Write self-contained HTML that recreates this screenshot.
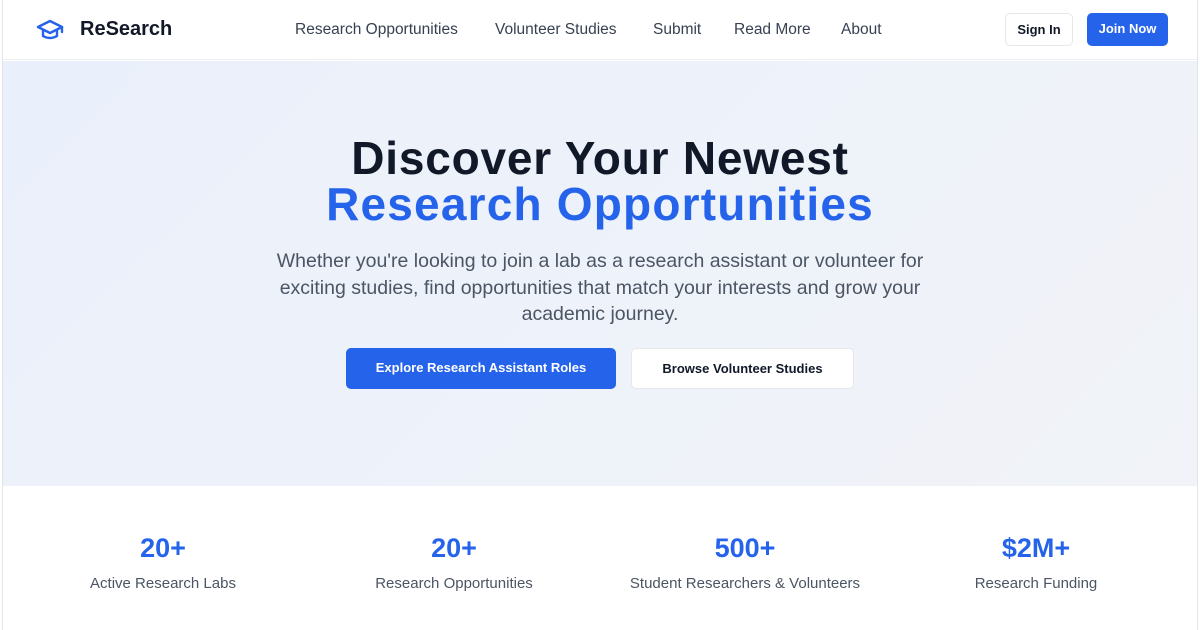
<!DOCTYPE html>
<html><head><meta charset="utf-8"><style>
*{margin:0;padding:0;box-sizing:border-box}
body{width:1200px;height:630px;background:#fff;font-family:"Liberation Sans",Arial,sans-serif;overflow:hidden;position:relative}
.frame{position:absolute;left:2px;top:0;width:1196px;height:630px;border-left:1px solid #e2e4e8;border-right:1px solid #e2e4e8}
header{position:absolute;left:3px;top:0;width:1194px;height:60px;background:#fff;border-bottom:1px solid #eceef2}
.logo{position:absolute;left:33px;top:18px;display:flex;align-items:center}
.logo span{font-weight:bold;font-size:20px;color:#111827;margin-left:16px}
nav{position:absolute;top:21px;left:0;font-size:15.5px;color:#374151}
nav a{position:absolute;white-space:nowrap}
.btn{position:absolute;border-radius:5px;font-size:13px;font-weight:bold;text-align:center}
.hero{position:absolute;left:3px;top:61px;width:1194px;height:425px;background:linear-gradient(135deg,#eaf0fb,#f1f3f8)}
h1{position:absolute;top:135px;left:0;width:1200px;text-align:center;font-size:46px;line-height:46px;font-weight:bold;color:#111827;letter-spacing:0.8px}
h1 .b{color:#2563eb;letter-spacing:1.2px}
p.sub{position:absolute;top:248px;left:255px;width:690px;text-align:center;font-size:19.5px;line-height:26.5px;color:#4b5563}
.stat{position:absolute;top:533px;text-align:center;width:300px}
.stat b{display:block;font-size:27px;color:#2563eb;height:42px}
.stat span{font-size:15px;color:#4b5563}
</style></head><body>
<div class="frame"></div>
<header>
<div class="logo"><svg width="28" height="22" viewBox="0 0 28 22" fill="none" stroke="#2563eb" stroke-width="2.4" stroke-linejoin="round" stroke-linecap="round"><path d="M2 8 L14 2 L26 8 L14 14 Z"/><path d="M7 11 V17 Q14 21 21 17 V11"/><path d="M26 8 V13"/></svg><span>ReSearch</span></div>
<nav><a style="left:292px">Research Opportunities</a><a style="left:492px">Volunteer Studies</a><a style="left:650px">Submit</a><a style="left:731px">Read More</a><a style="left:838px">About</a></nav>
<div class="btn" style="left:1002px;top:13px;width:68px;height:33px;line-height:31px;border:1px solid #e5e7eb;color:#111827">Sign In</div>
<div class="btn" style="left:1084px;top:13px;width:81px;height:33px;line-height:31px;background:#2563eb;color:#fff">Join Now</div>
</header>
<div class="hero"></div>
<h1>Discover Your Newest<br><span class="b">Research Opportunities</span></h1>
<p class="sub">Whether you're looking to join a lab as a research assistant or volunteer for exciting studies, find opportunities that match your interests and grow your academic journey.</p>
<div class="btn" style="left:346px;top:348px;width:270px;height:41px;line-height:39px;background:#2563eb;color:#fff">Explore Research Assistant Roles</div>
<div class="btn" style="left:631px;top:348px;width:223px;height:41px;line-height:39px;background:#fff;border:1px solid #e5e7eb;color:#111827">Browse Volunteer Studies</div>
<div class="stat" style="left:13px"><b>20+</b><span>Active Research Labs</span></div>
<div class="stat" style="left:304px"><b>20+</b><span>Research Opportunities</span></div>
<div class="stat" style="left:595px"><b>500+</b><span>Student Researchers &amp; Volunteers</span></div>
<div class="stat" style="left:886px"><b>$2M+</b><span>Research Funding</span></div>
</body></html>
